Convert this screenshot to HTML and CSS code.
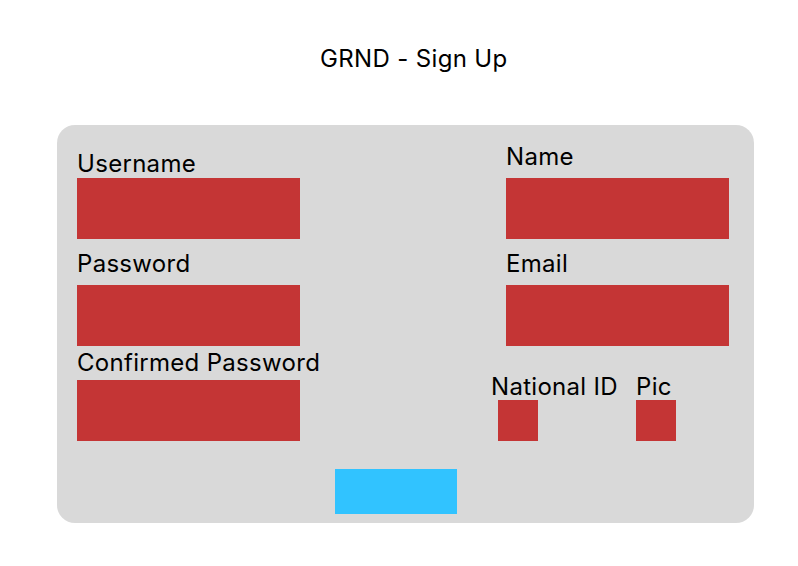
FILE: index.html
```html
<!DOCTYPE html>
<html>
<head>
<meta charset="utf-8">
<link rel="stylesheet" href="styles.css">
</head>
<body>
<h1 class="title">GRND - Sign Up</h1>
<div class="card">
  <div class="cols">
    <div class="col col-left">
      <div class="label">Username</div>
      <div class="input in-user"></div>
      <div class="label lb-pass">Password</div>
      <div class="input in-pass"></div>
      <div class="label lb-conf">Confirmed Password</div>
      <div class="input in-conf"></div>
    </div>
    <div class="col col-right">
      <div class="label">Name</div>
      <div class="input in-name"></div>
      <div class="label lb-email">Email</div>
      <div class="input in-email"></div>
      <div class="uploads">
        <div class="upload up-id">
          <div class="label">National ID</div>
          <div class="box box-id"></div>
        </div>
        <div class="upload up-pic">
          <div class="label">Pic</div>
          <div class="box box-pic"></div>
        </div>
      </div>
    </div>
  </div>
  <div class="button"></div>
</div>
</body>
</html>
```

FILE: styles.css
```css
html, body {
  margin: 0;
  padding: 0;
  background: #ffffff;
}
body {
  width: 798px;
  height: 566px;
  font-family: Inter, "Noto Sans", sans-serif;
  color: #000000;
  overflow: hidden;
}
.title {
  margin: 44px 0 0 320px;
  font-size: 24px;
  line-height: 29px;
  font-weight: 400;
  letter-spacing: 0.35px;
}
.card {
  box-sizing: border-box;
  margin: 52px 0 0 57px;
  width: 697px;
  height: 398px;
  background: #d9d9d9;
  border-radius: 18px;
}
.cols {
  display: flex;
  align-items: flex-start;
}
.col {
  display: flex;
  flex-direction: column;
  width: 223px;
}
.col-left {
  margin-left: 20px;
  padding-top: 28px;
}
.col-right {
  margin-left: 206px;
  padding-top: 21px;
}
.label {
  font-size: 24px;
  line-height: 21px;
  letter-spacing: 0.3px;
  white-space: nowrap;
}
.input {
  width: 223px;
  height: 61px;
  background: #c43535;
}
.in-user { margin-top: 4px; }
.lb-pass { margin-top: 14px; }
.in-pass { margin-top: 11px; }
.lb-conf { margin-top: 6px; }
.in-conf { margin-top: 7px; }
.in-name { margin-top: 11px; }
.lb-email { margin-top: 14px; }
.in-email { margin-top: 11px; }
.uploads {
  display: flex;
  margin-top: 30px;
  margin-left: -15px;
}
.upload {
  display: flex;
  flex-direction: column;
}
.up-id { width: 145px; }
.box {
  width: 40px;
  height: 41px;
  margin-top: 3px;
  background: #c43535;
}
.box-id { margin-left: 7px; }
.box-pic { margin-left: 0; }
.button {
  margin: 28px 0 0 278px;
  width: 122px;
  height: 45px;
  background: #31c3ff;
}
```
